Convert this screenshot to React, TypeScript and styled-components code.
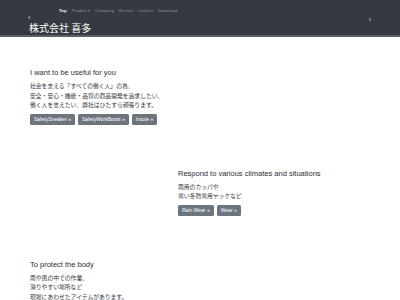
import styled, { createGlobalStyle } from 'styled-components'

const GlobalStyle = createGlobalStyle`
  body {
    margin: 0;
    background: #fff;
    font-family: 'Liberation Sans', 'Noto Sans CJK JP', sans-serif;
    color: #212529;
  }
`

const Header = styled.header`
  position: relative;
  height: 35px;
  background: #343a40;
  border-bottom: 2px solid #5c6168;
  padding-left: 29px;
  box-sizing: content-box;
`

const Nav = styled.nav`
  display: flex;
  gap: 5px;
  padding: 8px 0 0 30px;
  height: 5px;
`

const NavItem = styled.span<{ active?: boolean }>`
  font-size: 4.4px;
  line-height: 5px;
  color: ${({ active }) => (active ? '#f1f2f3' : '#8a8f96')};
  font-weight: ${({ active }) => (active ? 700 : 400)};
`

const Title = styled.h1`
  margin: 9px 0 0;
  font-size: 10px;
  line-height: 12px;
  font-weight: 400;
  color: #fff;
  font-family: 'Noto Sans CJK JP', sans-serif;
`

const Arrow = styled.span<{ side: 'left' | 'right' }>`
  position: absolute;
  top: ${({ side }) => (side === 'left' ? 14 : 16)}px;
  ${({ side }) => (side === 'left' ? 'left: 28px;' : 'right: 29px;')}
  font-size: 7px;
  line-height: 7px;
  color: #b8bcc1;
  font-weight: 700;
`

const Main = styled.main`
  padding: 31px 0 0 30px;
  display: flex;
  flex-direction: column;
  gap: 44px;
`

const Row = styled.section<{ offset?: number }>`
  margin-left: ${({ offset }) => offset || 0}px;
`

const Heading = styled.h2`
  margin: 0 0 3px;
  font-size: 7.5px;
  line-height: 10px;
  font-weight: 400;
  color: #2b2f33;
`

const Lines = styled.p`
  margin: 0;
  font-size: 5.8px;
  line-height: 9.5px;
  color: #33373b;
  font-family: 'Noto Sans CJK JP', sans-serif;
`

const Buttons = styled.div`
  display: flex;
  gap: 3px;
  margin-top: 4px;
`

const Button = styled.span`
  display: inline-flex;
  align-items: center;
  height: 11px;
  padding: 0 4px;
  border-radius: 1.5px;
  background: #6c757d;
  color: #fff;
  font-size: 5px;
`

type Feature = {
  title: string
  lines: string[]
  buttons: string[]
  offset?: number
}

const features: Feature[] = [
  {
    title: 'I want to be useful for you',
    lines: [
      '社会を支える「すべての働く人」の為、',
      '安全・安心・機能・品質の商品開発を追求したい、',
      '働く人を支えたい、弊社はひたすら頑張ります。',
    ],
    buttons: ['SafetySneaker »', 'SafetyWorkBoots »', 'Insole »'],
  },
  {
    title: 'Respond to various climates and situations',
    lines: ['雨用のカッパや', '寒い冬防寒用ヤッケなど'],
    buttons: ['Rain Wear »', 'Wear »'],
    offset: 148,
  },
  {
    title: 'To protect the body',
    lines: ['雨や風の中での作業、', '滑りやすい場所など', '現場にあわせたアイテムがあります。'],
    buttons: [],
  },
]

const navItems = ['Top', 'Product ▾', 'Company', 'Recruit', 'Contact', 'Download']

export default function App() {
  return (
    <>
      <GlobalStyle />
      <Header>
        <Nav>
          {navItems.map((item, i) => (
            <NavItem key={item} active={i === 0}>
              {item}
            </NavItem>
          ))}
        </Nav>
        <Title>株式会社 喜多</Title>
        <Arrow side="left">‹</Arrow>
        <Arrow side="right">›</Arrow>
      </Header>
      <Main>
        {features.map((f) => (
          <Row key={f.title} offset={f.offset}>
            <Heading>{f.title}</Heading>
            <Lines>
              {f.lines.map((line) => (
                <span key={line}>
                  {line}
                  <br />
                </span>
              ))}
            </Lines>
            {f.buttons.length > 0 && (
              <Buttons>
                {f.buttons.map((b) => (
                  <Button key={b}>{b}</Button>
                ))}
              </Buttons>
            )}
          </Row>
        ))}
      </Main>
    </>
  )
}
